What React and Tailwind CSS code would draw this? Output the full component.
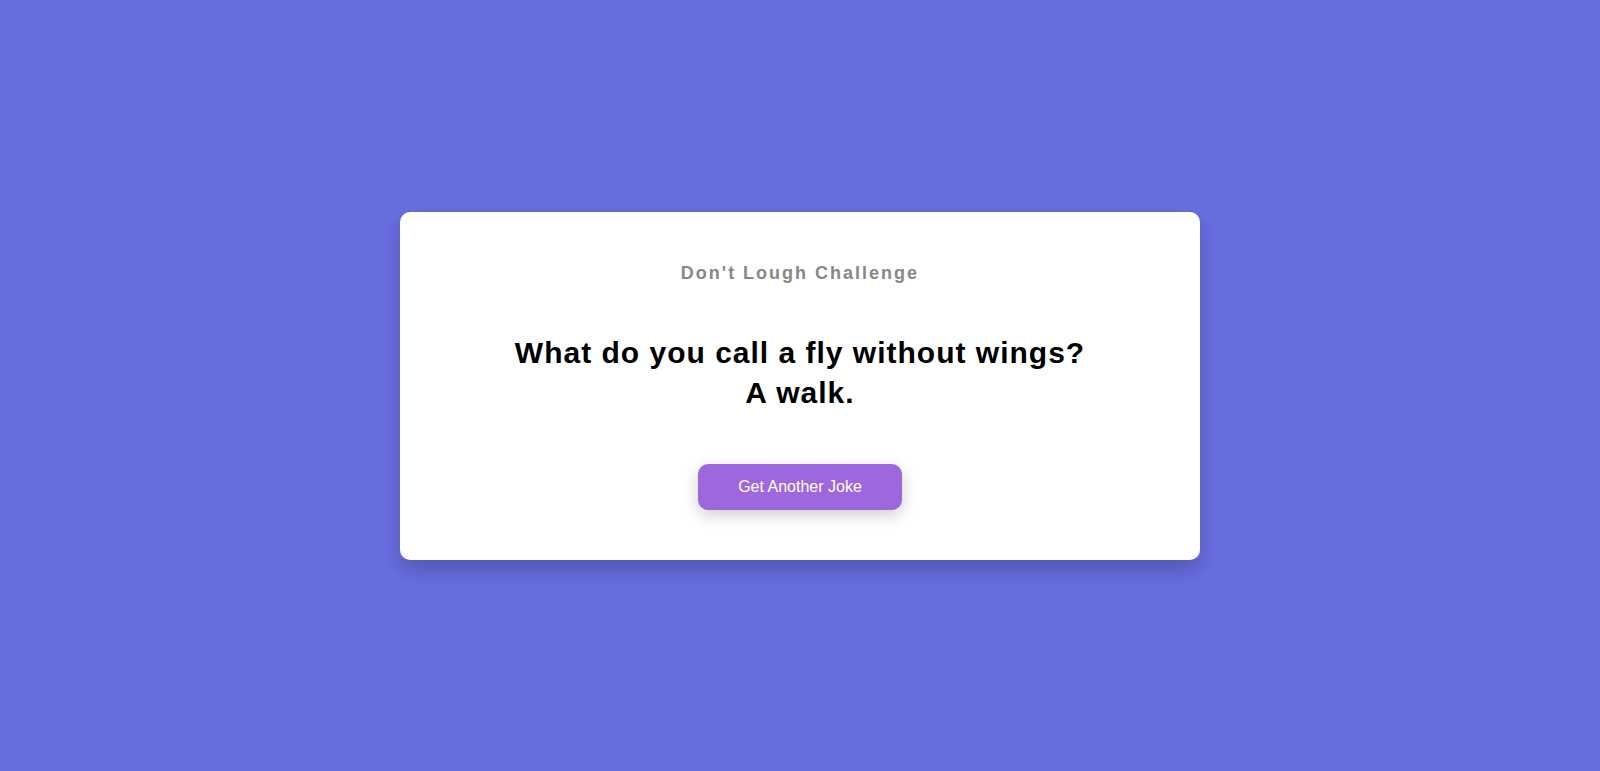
export default function App() {
  return (
    <div className="min-h-screen w-full bg-[#686de0] flex items-center justify-center font-['Liberation_Sans',Arial,sans-serif]">
      <div className="w-[800px] bg-white rounded-[10px] shadow-[0_10px_20px_rgba(0,0,0,0.2)] pt-[50px] pb-[50px] px-5 flex flex-col items-center text-center">
        <h3 className="text-[18px] leading-[22px] font-bold tracking-[2px] text-[#888888]">
          Don't Lough Challenge
        </h3>
        <div className="mt-[49px] max-w-[600px] text-[30px] leading-[40px] font-bold tracking-[1px] text-black">
          What do you call a fly without wings?
          <br />
          A walk.
        </div>
        <button className="mt-[51px] w-[204px] h-[46px] rounded-[10px] bg-[#9f67de] text-white text-[16px] shadow-[0_5px_15px_rgba(0,0,0,0.2)]">
          Get Another Joke
        </button>
      </div>
    </div>
  );
}
